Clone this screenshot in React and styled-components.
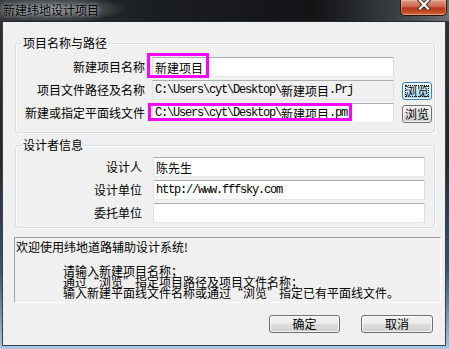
import React from "react"
import styled, { createGlobalStyle, css } from "styled-components"

const Global = createGlobalStyle`
  html, body { margin: 0; padding: 0; }
  body { font-family: "Noto Sans CJK SC", sans-serif; font-size: 12px; }
`

const Window = styled.div`
  width: 449px;
  height: 349px;
  box-sizing: border-box;
  display: flex;
  flex-direction: column;
  overflow: hidden;
  background: linear-gradient(180deg, #2e3236 0%, #24282c 45%, #3c5570 78%, #a8c5e3 100%);
`

const TitleBar = styled.div`
  height: 21px;
  flex: none;
  display: flex;
  justify-content: space-between;
  align-items: flex-start;
  background:
    radial-gradient(ellipse 75px 13px at 52px 9px, rgba(130, 134, 138, 0.95), rgba(130, 134, 138, 0) 100%),
    linear-gradient(90deg, #34383c 0%, #1b1e21 35%, #121416 70%, #3a3e42 88%, #6a6e72 100%);
`

const Title = styled.div`
  padding-left: 3px;
  line-height: 19px;
  color: #000;
  text-shadow: 0 0 3px rgba(255, 255, 255, 0.55), 0 0 7px rgba(255, 255, 255, 0.35);
`

const CloseButton = styled.div`
  width: 47px;
  height: 16px;
  margin-right: 2px;
  box-sizing: border-box;
  display: flex;
  justify-content: center;
  align-items: flex-start;
  border: 1px solid #2e1710;
  border-top: none;
  border-radius: 0 0 5px 5px;
  background: linear-gradient(180deg, #dd9a88 0%, #cf6f55 40%, #b9361a 55%, #c24a25 80%, #d9764c 100%);
  box-shadow: inset 0 0 0 1px rgba(255, 220, 200, 0.35);
`

const Client = styled.div`
  flex: 1;
  margin: 0 3px 3px 2px;
  box-sizing: border-box;
  border: 1px solid #3b4045;
  border-top-color: #24282c;
  background: #f0f0f0;
  padding: 14px 10px 0 12px;
  display: flex;
  flex-direction: column;
`

const Group = styled.fieldset`
  margin: ${p => p.$top}px 0 0 0;
  padding: ${p => p.$pt}px 0 ${p => p.$pb}px 0;
  min-inline-size: 0;
  border: 1px solid #d5dfe5;
  border-radius: 3px;
  box-shadow: inset 1px 1px 0 #fff, 1px 1px 0 #fff;
`

const Legend = styled.legend`
  margin-left: 6px;
  padding: 0 1px;
  line-height: 14px;
  color: #000;
`

const Rows = styled.div`
  display: grid;
  grid-template-columns: ${p => p.$cols};
  column-gap: ${p => p.$gap}px;
  row-gap: 3px;
  grid-auto-rows: 20px;
`

const Label = styled.div`
  grid-column: 1;
  justify-self: end;
  align-self: center;
  white-space: nowrap;
  line-height: 14px;
  color: #000;
`

const Field = styled.div`
  position: relative;
  box-sizing: border-box;
  height: 20px;
  display: flex;
  align-items: center;
  padding: 0 2px;
  border: 1px solid;
  border-color: #abadb3 #dbdfe6 #e3e9ef #e2e3ea;
  border-radius: 1px;
  background: ${p => (p.$readonly ? "#f0f0f0" : "#fff")};
  white-space: nowrap;
  overflow: visible;
  color: #000;
  ${p =>
    p.$mono &&
    css`
      font-family: "Liberation Mono", "Noto Sans CJK SC", monospace;
      letter-spacing: -1.2px;
    `}
`

const Cjk = styled.span`
  font-family: "Noto Sans CJK SC", sans-serif;
  letter-spacing: 0;
`

const Mark = styled.span`
  position: absolute;
  left: ${p => p.$l}px;
  top: ${p => p.$t}px;
  width: ${p => p.$w}px;
  height: ${p => p.$h}px;
  box-sizing: border-box;
  border: 3px solid #ff00ff;
  pointer-events: none;
`

const Button = styled.button`
  box-sizing: border-box;
  width: ${p => p.$w}px;
  height: 18px;
  padding: 0;
  font-family: "Noto Sans CJK SC", sans-serif;
  font-size: 12px;
  line-height: 14px;
  color: #000;
  border: 1px solid #707070;
  border-radius: 3px;
  background: linear-gradient(180deg, #f2f2f2 0%, #ebebeb 48%, #dddddd 52%, #cfcfcf 100%);
  box-shadow: inset 0 0 0 1px rgba(255, 255, 255, 0.75);
  ${p =>
    p.$focused &&
    css`
      border-color: #3c7fb1;
      background: linear-gradient(180deg, #eaf6fd 0%, #d9f0fc 48%, #bee6fd 52%, #a7d9f5 100%);
      outline: 1px dotted #000;
      outline-offset: -4px;
    `}
`

const SideButton = styled(Button)`
  justify-self: end;
  align-self: end;
`

const MessageBox = styled.div`
  margin: 9px -6px 0 -1px;
  height: 66px;
  box-sizing: border-box;
  padding: 3px 1px;
  border: 1px solid;
  border-color: #a0a0a0 #fff #fff #a0a0a0;
  color: #000;
`

const Welcome = styled.div`
  line-height: 12px;
`

const Hints = styled.div`
  margin-top: 12px;
  padding-left: 47px;
  line-height: 11px;
  white-space: nowrap;
`

const Quote = styled.span`
  display: inline-block;
  width: 12px;
  text-align: ${p => (p.$open ? "right" : "left")};
`

const Footer = styled.div`
  display: flex;
  justify-content: flex-end;
  gap: 21px;
  margin: 12px 2px 0 0;
`

function CloseGlyph() {
  return (
    <svg width="14" height="10" viewBox="0 0 14 10">
      <path d="M3 0.5 L11 8.5 M11 0.5 L3 8.5" stroke="#3a2a26" strokeWidth="4.2" strokeLinecap="square" />
      <path d="M3 0.5 L11 8.5 M11 0.5 L3 8.5" stroke="#fff" strokeWidth="2.2" strokeLinecap="square" />
    </svg>
  )
}

function Browse() {
  return (
    <>
      <Quote $open>“</Quote>浏览<Quote>”</Quote>
    </>
  )
}

export default function App() {
  return (
    <Window lang="zh-CN">
      <Global />
      <TitleBar>
        <Title>新建纬地设计项目</Title>
        <CloseButton>
          <CloseGlyph />
        </CloseButton>
      </TitleBar>
      <Client>
        <Group $top={0} $pt={7} $pb={9}>
          <Legend>项目名称与路径</Legend>
          <Rows $cols="129px 242px 31px" $gap={7}>
            <Label>新建项目名称</Label>
            <Field>
              新建项目
              <Mark $l={-6} $t={-5} $w={62} $h={25} />
            </Field>
            <Label>项目文件路径及名称</Label>
            <Field $readonly $mono>
              {"C:\\Users\\cyt\\Desktop\\"}
              <Cjk>新建项目</Cjk>
              .Prj
            </Field>
            <SideButton $w={30} $focused>浏览</SideButton>
            <Label>新建或指定平面线文件</Label>
            <Field $mono>
              {"C:\\Users\\cyt\\Desktop\\"}
              <Cjk>新建项目</Cjk>
              .pm
              <Mark $l={-5} $t={-1} $w={204} $h={18} />
            </Field>
            <SideButton $w={30}>浏览</SideButton>
          </Rows>
        </Group>
        <Group $top={5} $pt={5} $pb={4}>
          <Legend>设计者信息</Legend>
          <Rows $cols="126px 272px" $gap={11}>
            <Label>设计人</Label>
            <Field>陈先生</Field>
            <Label>设计单位</Label>
            <Field $mono>http://www.fffsky.com</Field>
            <Label>委托单位</Label>
            <Field />
          </Rows>
        </Group>
        <MessageBox>
          <Welcome>欢迎使用纬地道路辅助设计系统!</Welcome>
          <Hints>
            <div>请输入新建项目名称；</div>
            <div>通过<Browse />指定项目路径及项目文件名称；</div>
            <div>输入新建平面线文件名称或通过<Browse />指定已有平面线文件。</div>
          </Hints>
        </MessageBox>
        <Footer>
          <Button $w={71}>确定</Button>
          <Button $w={72}>取消</Button>
        </Footer>
      </Client>
    </Window>
  )
}
